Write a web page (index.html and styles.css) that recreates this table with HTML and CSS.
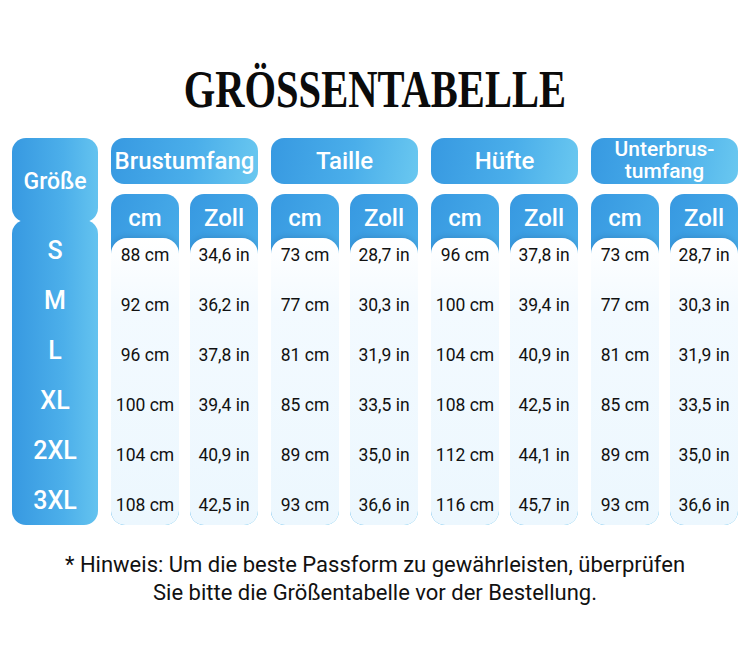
FILE: index.html
```html
<!DOCTYPE html>
<html lang="de">
<head>
<meta charset="utf-8">
<title>Größentabelle</title>
<link rel="stylesheet" href="styles.css">
</head>
<body>
<div class="page">
  <h1 class="title"><span>GRÖSSENTABELLE</span></h1>

  <div class="table">
    <div class="size-col">
      <div class="size-head">Größe</div>
      <div class="size-body">
        <div class="size">S</div>
        <div class="size">M</div>
        <div class="size">L</div>
        <div class="size">XL</div>
        <div class="size">2XL</div>
        <div class="size">3XL</div>
      </div>
    </div>

    <div class="group">
      <div class="group-head">Brustumfang</div>
      <div class="subs">
        <div class="sub"><div class="sub-head">cm</div><div class="sub-body"><div>88 cm</div><div>92 cm</div><div>96 cm</div><div>100 cm</div><div>104 cm</div><div>108 cm</div></div></div>
        <div class="sub"><div class="sub-head">Zoll</div><div class="sub-body"><div>34,6 in</div><div>36,2 in</div><div>37,8 in</div><div>39,4 in</div><div>40,9 in</div><div>42,5 in</div></div></div>
      </div>
    </div>

    <div class="group">
      <div class="group-head">Taille</div>
      <div class="subs">
        <div class="sub"><div class="sub-head">cm</div><div class="sub-body"><div>73 cm</div><div>77 cm</div><div>81 cm</div><div>85 cm</div><div>89 cm</div><div>93 cm</div></div></div>
        <div class="sub"><div class="sub-head">Zoll</div><div class="sub-body"><div>28,7 in</div><div>30,3 in</div><div>31,9 in</div><div>33,5 in</div><div>35,0 in</div><div>36,6 in</div></div></div>
      </div>
    </div>

    <div class="group">
      <div class="group-head">Hüfte</div>
      <div class="subs">
        <div class="sub"><div class="sub-head">cm</div><div class="sub-body"><div>96 cm</div><div>100 cm</div><div>104 cm</div><div>108 cm</div><div>112 cm</div><div>116 cm</div></div></div>
        <div class="sub"><div class="sub-head">Zoll</div><div class="sub-body"><div>37,8 in</div><div>39,4 in</div><div>40,9 in</div><div>42,5 in</div><div>44,1 in</div><div>45,7 in</div></div></div>
      </div>
    </div>

    <div class="group">
      <div class="group-head two-line">Unterbrus-<br>tumfang</div>
      <div class="subs">
        <div class="sub"><div class="sub-head">cm</div><div class="sub-body"><div>73 cm</div><div>77 cm</div><div>81 cm</div><div>85 cm</div><div>89 cm</div><div>93 cm</div></div></div>
        <div class="sub"><div class="sub-head">Zoll</div><div class="sub-body"><div>28,7 in</div><div>30,3 in</div><div>31,9 in</div><div>33,5 in</div><div>35,0 in</div><div>36,6 in</div></div></div>
      </div>
    </div>
  </div>

  <p class="note">* Hinweis: Um die beste Passform zu gewährleisten, überprüfen<br>Sie bitte die Größentabelle vor der Bestellung.</p>
</div>
</body>
</html>
```

FILE: styles.css
```css
* { box-sizing: border-box; }

html, body {
  margin: 0;
  padding: 0;
  background: #ffffff;
}

.page {
  width: 750px;
  height: 662px;
  font-family: Roboto, "Liberation Sans", sans-serif;
  color: #111111;
}

.title {
  margin: 0;
  padding-top: 59px;
  height: 138px;
  text-align: center;
  font-family: "Liberation Serif", "Times New Roman", serif;
  font-weight: 700;
  font-size: 53px;
  line-height: 60px;
  color: #0b0b0b;
}

.title span {
  display: inline-block;
  transform: scaleX(0.765);
  transform-origin: center;
}

.table {
  display: flex;
  gap: 13px;
  padding: 0 12px;
  height: 387px;
}

/* size column */
.size-col {
  width: 86px;
  display: flex;
  flex-direction: column;
}

.size-head,
.size-body {
  background: linear-gradient(90deg, #3799e1 0%, #4cafea 60%, #64c3ef 100%);
  border-radius: 14px;
  color: #ffffff;
  font-weight: 500;
}

.size-head {
  height: 87px;
  display: flex;
  align-items: center;
  justify-content: center;
  font-size: 23px;
  padding-top: 2px;
}

.size-body {
  margin-top: -2px;
  flex: 1;
  padding-top: 5px;
  display: grid;
  grid-template-rows: repeat(6, 50px);
  font-size: 25px;
}

.size {
  display: flex;
  align-items: center;
  justify-content: center;
}

/* groups */
.group {
  width: 147px;
  display: flex;
  flex-direction: column;
  gap: 10px;
}

.group-head {
  height: 46px;
  border-radius: 13px;
  background: linear-gradient(100deg, #3799e1 0%, #4aaeea 55%, #6ac8f0 100%);
  color: #ffffff;
  font-weight: 500;
  font-size: 24px;
  display: flex;
  align-items: center;
  justify-content: center;
  text-align: center;
  white-space: nowrap;
}

.group-head.two-line {
  font-size: 21px;
  line-height: 22px;
  padding-bottom: 2px;
}

.subs {
  flex: 1;
  display: flex;
  gap: 11px;
}

.sub {
  flex: 1;
  display: flex;
  flex-direction: column;
  border-radius: 14px;
  background: linear-gradient(110deg, #3799e1 0%, #4bafea 55%, #6ac8f0 100%);
  overflow: hidden;
}

.sub-head {
  height: 44px;
  display: flex;
  align-items: center;
  justify-content: center;
  color: #ffffff;
  font-weight: 500;
  font-size: 24px;
  padding-top: 4px;
}

.sub-body {
  flex: 1;
  border-radius: 16px 16px 14px 14px;
  background: linear-gradient(180deg, #ffffff 0%, #f3faff 25%, #ecf7fe 100%);
  box-shadow: 0 -2px 5px rgba(20, 70, 120, 0.18);
  display: flex;
  flex-direction: column;
  gap: 16px;
  font-size: 17.5px;
  color: #111111;
}

.sub-body div {
  height: 34px;
  display: flex;
  align-items: center;
  justify-content: center;
  white-space: nowrap;
}

.note {
  margin: 26px 0 0;
  text-align: center;
  font-size: 22px;
  line-height: 28px;
  color: #111111;
}
```
